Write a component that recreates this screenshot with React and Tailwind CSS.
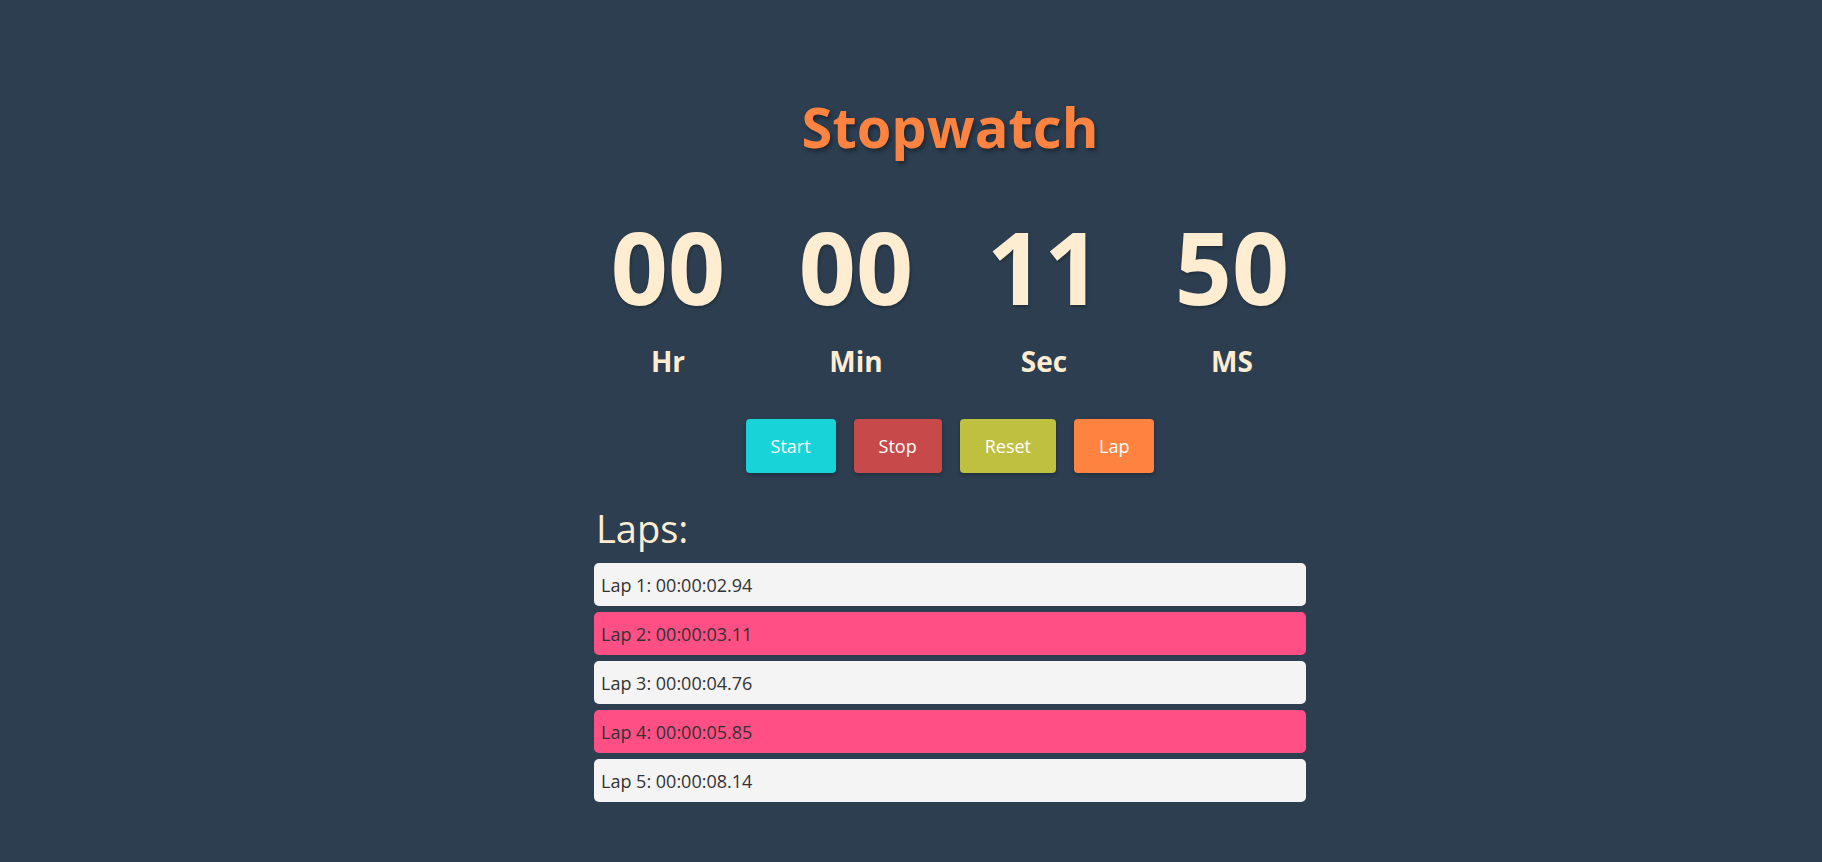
import React from 'react';

const units = [
  { value: '00', label: 'Hr' },
  { value: '00', label: 'Min' },
  { value: '11', label: 'Sec' },
  { value: '50', label: 'MS' },
];

const laps = ['00:00:02.94', '00:00:03.11', '00:00:04.76', '00:00:05.85', '00:00:08.14'];

const App = () => {
  return (
    <div className="min-h-screen bg-[#2c3e50] font-['Open_Sans',sans-serif] flex flex-col items-center pl-[78px]">
      <h1 className="mt-[98px] text-[56px] leading-none font-bold text-[#ff8340] [text-shadow:2px_3px_4px_rgba(0,0,0,0.35)]">
        Stopwatch
      </h1>

      {/* time display */}
      <div className="mt-[62px] flex">
        {units.map((u) => (
          <div key={u.label} className="w-[188px] flex flex-col items-center">
            <span className="text-[100px] leading-none font-bold text-[#ffedd2] [text-shadow:1px_2px_3px_rgba(0,0,0,0.25)]">
              {u.value}
            </span>
            <span className="mt-[31px] text-[28px] leading-none font-bold text-[#ffedd2]">{u.label}</span>
          </div>
        ))}
      </div>

      <div className="mt-[44px] flex gap-[18px]">
        <button className="h-[54px] px-[25px] rounded text-[18px] text-white bg-[#17d4d8] shadow-[0_2px_4px_rgba(0,0,0,0.25)]">
          Start
        </button>
        <button className="h-[54px] px-[25px] rounded text-[18px] text-white bg-[#c8494a] shadow-[0_2px_4px_rgba(0,0,0,0.25)]">
          Stop
        </button>
        <button className="h-[54px] px-[25px] rounded text-[18px] text-white bg-[#bfbf40] shadow-[0_2px_4px_rgba(0,0,0,0.25)]">
          Reset
        </button>
        <button className="h-[54px] px-[25px] rounded text-[18px] text-white bg-[#ff8340] shadow-[0_2px_4px_rgba(0,0,0,0.25)]">
          Lap
        </button>
      </div>

      <div className="w-[712px] mt-[36px] pb-10">
        <h2 className="pl-[2px] text-[38px] leading-none text-[#ffedd2]">Laps:</h2>
        <ul className="mt-[16px] flex flex-col gap-[6px]">
          {laps.map((t, i) => (
            <li
              key={i}
              className={`pl-[7px] pt-[11px] pb-[9px] rounded-[5px] text-[18px] leading-[23px] text-[#333] ${
                i % 2 === 1 ? 'bg-[#ff4f85]' : 'bg-[#f4f4f4]'
              }`}
            >
              Lap {i + 1}: {t}
            </li>
          ))}
        </ul>
      </div>
    </div>
  );
};

export default App;
